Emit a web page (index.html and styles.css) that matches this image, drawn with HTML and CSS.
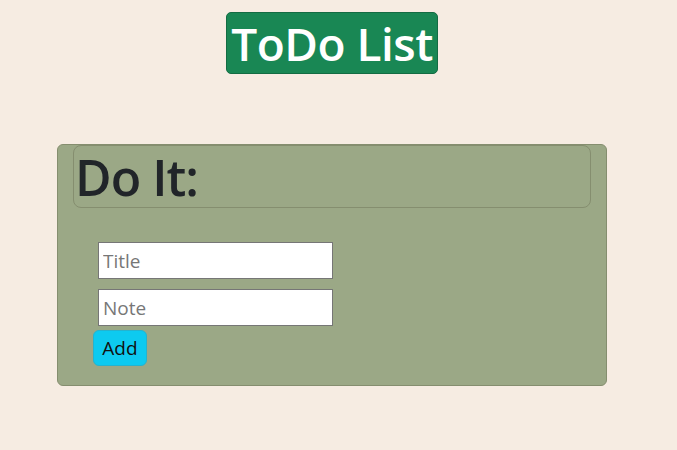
FILE: index.html
```html
<!DOCTYPE html>
<html>
<head>
<meta charset="utf-8">
<link rel="stylesheet" href="styles.css">
</head>
<body>
<header class="top">
  <h1 class="brand">ToDo List</h1>
</header>
<main class="card">
  <div class="card-head"><h2 class="head-title">Do It:</h2></div>
  <form class="form">
    <input class="field" type="text" placeholder="Title">
    <input class="field" type="text" placeholder="Note">
    <button class="btn" type="button">Add</button>
  </form>
</main>
</body>
</html>
```
FILE: styles.css
```css
* { box-sizing: border-box; }
html, body { margin: 0; padding: 0; }
body {
  background: #f6ece2;
  font-family: "Open Sans", "Noto Sans", sans-serif;
  width: 677px;
  height: 450px;
  overflow: hidden;
}
.top {
  display: flex;
  justify-content: center;
  padding-top: 12px;
}
.brand {
  margin: 0 13px 0 0;
  background: #198754;
  color: #fff;
  border: 1px solid #146c43;
  border-radius: 5px;
  height: 62px;
  width: 212px;
  display: flex;
  align-items: center;
  justify-content: center;
  font-size: 46px;
  font-weight: 600;
  letter-spacing: -0.5px;
  line-height: 1;
}
.card {
  margin: 70px 0 0 57px;
  width: 550px;
  height: 242px;
  background: #9ba886;
  border: 1px solid #858e6f;
  border-radius: 6px;
  padding: 0 15px;
}
.card-head {
  height: 63px;
  border: 1px solid #858e6f;
  border-radius: 8px;
  display: flex;
  align-items: center;
  padding-left: 1px;
}
.head-title {
  margin: 0;
  font-size: 50px;
  font-weight: 600;
  color: #212529;
  line-height: 1;
  letter-spacing: -1px;
}
.form {
  display: flex;
  flex-direction: column;
  align-items: flex-start;
  padding: 34px 0 0 20px;
}
.field {
  width: 235px;
  height: 37px;
  margin-left: 5px;
  margin-bottom: 10px;
  border: 1px solid #767676;
  background: #fff;
  font-family: inherit;
  font-size: 19px;
  padding: 0 4px;
  color: #212529;
}
.field:last-of-type { margin-bottom: 4px; }
.field::placeholder { color: #777; }
.btn {
  background: #0dcaf0;
  border: 1px solid #25b3cf;
  border-radius: 6px;
  height: 36px;
  width: 54px;
  padding: 0;
  font-family: inherit;
  font-size: 19px;
  color: #111;
  margin-top: 0;
}
```
